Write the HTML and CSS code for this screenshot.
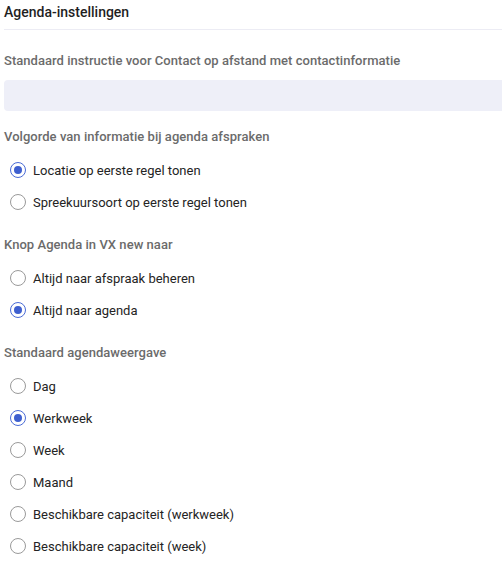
FILE: index.html
```html
<!DOCTYPE html>
<html lang="nl">
<head>
<meta charset="utf-8">
<title>Agenda-instellingen</title>
<link rel="stylesheet" href="styles.css">
</head>
<body>
<div class="page">
  <h1 class="title">Agenda-instellingen</h1>
  <div class="content">
    <div class="field">
      <div class="label">Standaard instructie voor Contact op afstand met contactinformatie</div>
      <div class="input"></div>
    </div>
    <div class="group">
      <div class="label">Volgorde van informatie bij agenda afspraken</div>
      <div class="options">
        <label class="option"><span class="radio checked"></span>Locatie op eerste regel tonen</label>
        <label class="option"><span class="radio"></span>Spreekuursoort op eerste regel tonen</label>
      </div>
    </div>
    <div class="group">
      <div class="label">Knop Agenda in VX new naar</div>
      <div class="options">
        <label class="option"><span class="radio"></span>Altijd naar afspraak beheren</label>
        <label class="option"><span class="radio checked"></span>Altijd naar agenda</label>
      </div>
    </div>
    <div class="group">
      <div class="label">Standaard agendaweergave</div>
      <div class="options">
        <label class="option"><span class="radio"></span>Dag</label>
        <label class="option"><span class="radio checked"></span>Werkweek</label>
        <label class="option"><span class="radio"></span>Week</label>
        <label class="option"><span class="radio"></span>Maand</label>
        <label class="option"><span class="radio"></span>Beschikbare capaciteit (werkweek)</label>
        <label class="option"><span class="radio"></span>Beschikbare capaciteit (week)</label>
      </div>
    </div>
  </div>
</div>
</body>
</html>
```
FILE: styles.css
```css
html, body {
  margin: 0;
  padding: 0;
  background: #ffffff;
}
body {
  font-family: Roboto, "Liberation Sans", Arial, sans-serif;
  color: #222;
  overflow: hidden;
}
.page {
  padding-left: 4px;
  width: calc(100% + 20px);
}
.title {
  margin: 0;
  font-size: 14px;
  font-weight: 500;
  line-height: 20px;
  padding-top: 2px;
  padding-bottom: 7px;
  border-bottom: 1px solid #ececf4;
  color: #1f1f1f;
}
.content {
  padding-top: 22px;
  display: flex;
  flex-direction: column;
  gap: 18px;
}
.field {
  margin-bottom: -1px;
}
.label {
  font-size: 13px;
  font-weight: 500;
  color: #6b6b6b;
  line-height: 18px;
  letter-spacing: 0.04px;
}
.field .label {
  margin-bottom: 10px;
}
.input {
  height: 31px;
  background: #eeeff8;
  border-radius: 4px;
}
.group .options {
  display: flex;
  flex-direction: column;
  margin-top: 8px;
}
.option {
  display: flex;
  align-items: center;
  height: 32px;
  font-size: 13px;
  color: #242424;
  gap: 7px;
  padding-left: 6px;
}
.radio {
  width: 14px;
  height: 14px;
  border: 1px solid #9a9a9a;
  border-radius: 50%;
  box-sizing: content-box;
  display: inline-flex;
  align-items: center;
  justify-content: center;
  flex: none;
}
.radio.checked {
  border-color: #4a6bd6;
}
.radio.checked::after {
  content: "";
  width: 8px;
  height: 8px;
  border-radius: 50%;
  background: #3e5fcf;
}
```
